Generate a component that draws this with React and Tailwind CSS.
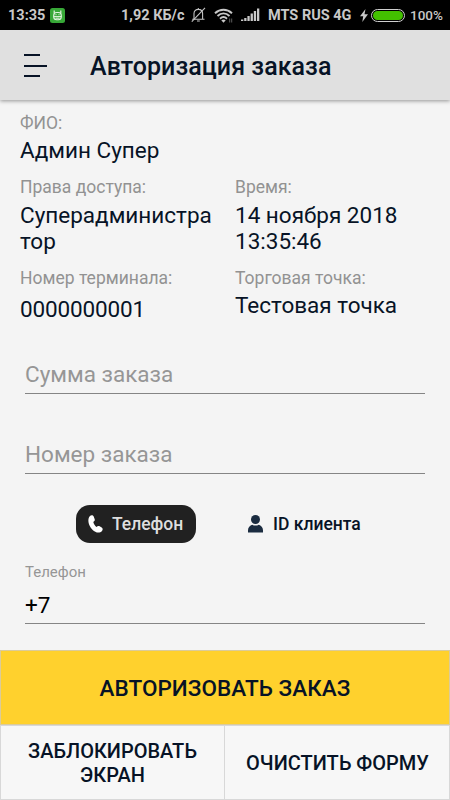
function MiuiIcon() {
  return (
    <svg width="15" height="15" viewBox="0 0 15 15" fill="none" stroke="#e4f5e2">
      <rect width="15" height="15" rx="2.5" fill="#37a837" stroke="none" />
      <path d="M4.200 2.500v3M10.800 2.500v3" strokeWidth="1.200" />
      <rect x="3.700" y="4.500" width="7.600" height="7.300" rx="3" strokeWidth="1.100" />
      <path d="M3.700 8.600h7.600M5.500 6.700h1M8.500 6.700h1M5.500 10.200h4" strokeWidth="1" />
    </svg>
  );
}

function BellOffIcon() {
  return (
    <svg width="15" height="16" viewBox="0 0 15 16" fill="none" stroke="#c4c4c4" strokeWidth="1.100">
      <path d="M1.200 12.200h12.300M3 12V6.600C3 4 4.900 2.400 7.300 2.400s4.300 1.600 4.300 4.200V12M7.300 2.400V1M6 14h2.800" />
      <path d="M14 .8L.8 14.600" />
    </svg>
  );
}

function WifiIcon() {
  return (
    <svg width="19" height="15" viewBox="0 0 19 15" fill="none" stroke="#c8c8c8" strokeWidth="1.900">
      <path d="M1 5.200c5-4.600 12-4.600 17 0M3.500 8c3.600-3.300 8.400-3.300 12 0M6 10.700c2.100-2 4.900-2 7 0" />
      <path d="M7.300 12.200c1.300-1.100 3.100-1.100 4.400 0l-2.200 2.500z" fill="#c8c8c8" stroke="none" />
      <path d="M15.700 10.500v4M17.700 10.500v4" stroke="#5c5c5c" strokeWidth="1" />
    </svg>
  );
}

function SignalIcon() {
  return (
    <svg width="19" height="14" viewBox="0 0 19 14" fill="#c8c8c8">
      <path d="M0 11.500h2.300V13H0zM3.200 10h2.300v3H3.200zM6.400 8h2.300v5H6.400zM9.600 5.500h2.300V13H9.600zM12.800 3h2.300v10h-2.300zM16 .5h2.300V13H16z" />
    </svg>
  );
}

function StatusBar() {
  return (
    <div className="flex h-[30px] shrink-0 items-center bg-black pl-2 text-[14.5px] font-bold whitespace-nowrap text-[#c8c8c8]">
      <span className="w-[42px] pt-px">13:35</span>
      <MiuiIcon />
      <span className="ml-[56px] w-[70px] pt-px">1,92 КБ/с</span>
      <BellOffIcon />
      <span className="ml-2"><WifiIcon /></span>
      <span className="ml-2"><SignalIcon /></span>
      <span className="ml-2 w-[92px] pt-px">MTS RUS 4G</span>
      <svg width="8" height="13" viewBox="0 0 8 13" fill="#c8c8c8">
        <path d="M5.500 0L0 7.200h3.200L2.300 13 8 5.200H4.500z" />
      </svg>
      <span className="ml-[3px] flex h-[13px] w-[34px] rounded-full border border-[#d0d0d0] p-px">
        <span className="flex-1 rounded-full bg-[#43c000]" />
      </span>
      <span className="ml-[5px] pt-px text-[13.5px] font-medium">100%</span>
    </div>
  );
}

function Header() {
  return (
    <header className="z-10 flex h-[70px] shrink-0 items-center bg-[#e0e0e0] pl-6 shadow-[0_1px_4px_rgba(0,0,0,0.4)]">
      <svg width="24" height="24" viewBox="0 0 24 24" stroke="#071326" strokeWidth="2">
        <path d="M0 2h16M0 13h23M0 23h16" />
      </svg>
      <h1 className="ml-[42px] pt-[3px] text-[25px] leading-[30px] font-medium tracking-[0.05px]">Авторизация заказа</h1>
    </header>
  );
}

function Info({ label, value, valueClass = 'mt-[3px]' }) {
  return (
    <div>
      <div className="text-[17.5px] leading-[21px] text-[#929292]">{label}</div>
      <div className={`text-[22.5px] leading-[26px] break-all ${valueClass}`}>{value}</div>
    </div>
  );
}

function Field({ placeholder }) {
  return (
    <div className="h-[40px] border-b border-[#858585] text-[22.5px] leading-[40px] text-[#969696]">
      {placeholder}
    </div>
  );
}

export default function App() {
  return (
    <div className="flex h-[800px] w-[450px] flex-col overflow-hidden bg-[#f4f4f4] font-[Roboto,sans-serif] text-[#071326]">
      <StatusBar />
      <Header />

      <main className="flex-1">
        <section className="px-5 pt-[13px]">
          <Info label="ФИО:" value="Админ Супер" />
          <div className="mt-[14px] grid grid-cols-[195px_195px] gap-x-5">
            <Info label="Права доступа:" value="Суперадминистратор" valueClass="mt-[4px]" />
            <Info label="Время:" value={<>14 ноября 2018<br />13:35:46</>} valueClass="mt-[4px]" />
          </div>
          <div className="mt-[14px] grid grid-cols-[195px_195px] gap-x-5">
            <Info label="Номер терминала:" value="0000000001" valueClass="mt-[7px] tracking-[-0.15px]" />
            <Info label="Торговая точка:" value="Тестовая точка" />
          </div>
        </section>

        <section className="mt-[32px] px-[25px]">
          <Field placeholder="Сумма заказа" />
          <div className="mt-[40px]">
            <Field placeholder="Номер заказа" />
          </div>
          <div className="mt-[31px] flex h-[38px] items-center text-[17.5px] font-medium">
            <button className="ml-[51px] flex h-[38px] w-[120px] items-center rounded-[14px] bg-[#212121] pl-3 text-[#dedede]">
              <svg width="15" height="19" viewBox="0 0 15 19" fill="#fff">
                <path d="M2 1C3 .1 5 0 5.700 1.500l1 2.800c.4 1.200-.2 2-1.400 2.600.5 2 1.600 3.800 3.200 5 .9-.9 1.800-1.200 2.700-.8l2.500 1.500c1.200.8 1.300 2.200.3 3.300-1.600 1.800-4.200 2.300-6.700.8C3.700 14.700.8 10.700.4 6.200.3 4 .7 2.200 2 1z" />
              </svg>
              <span className="ml-[9px] pt-px">Телефон</span>
            </button>
            <button className="ml-[52px] flex items-center">
              <svg width="15" height="18" viewBox="0 0 15 18" fill="#1b2c40">
                <circle cx="7.500" cy="4.500" r="4.500" />
                <path d="M0 17.500v-2.200c0-3 2-5 4.200-5.600 2 1.200 4.600 1.200 6.600 0C13 10.300 15 12.300 15 15.300v2.200z" />
              </svg>
              <span className="ml-[10px] pt-px">ID клиента</span>
            </button>
          </div>
          <div className="mt-[20px] text-[15px] leading-[18px] text-[#969696]">Телефон</div>
          <div className="mt-[7px] h-[36px] border-b border-[#858585] text-[22.5px] leading-[35px] text-black">+7</div>
        </section>
      </main>

      <footer className="h-[150px] shrink-0 font-medium">
        <button className="block h-[75px] w-full border border-[#dbcb9a] bg-[#ffd12d] pt-0.5 text-[22.5px] tracking-[0.05px]">
          АВТОРИЗОВАТЬ ЗАКАЗ
        </button>
        <div className="grid h-[75px] grid-cols-2 border border-[#d8d8d8] bg-[#f7f7f7] text-[20px] leading-6">
          <button className="border-r border-[#d8d8d8]">ЗАБЛОКИРОВАТЬ<br />ЭКРАН</button>
          <button className="pl-px">ОЧИСТИТЬ ФОРМУ</button>
        </div>
      </footer>
    </div>
  );
}
